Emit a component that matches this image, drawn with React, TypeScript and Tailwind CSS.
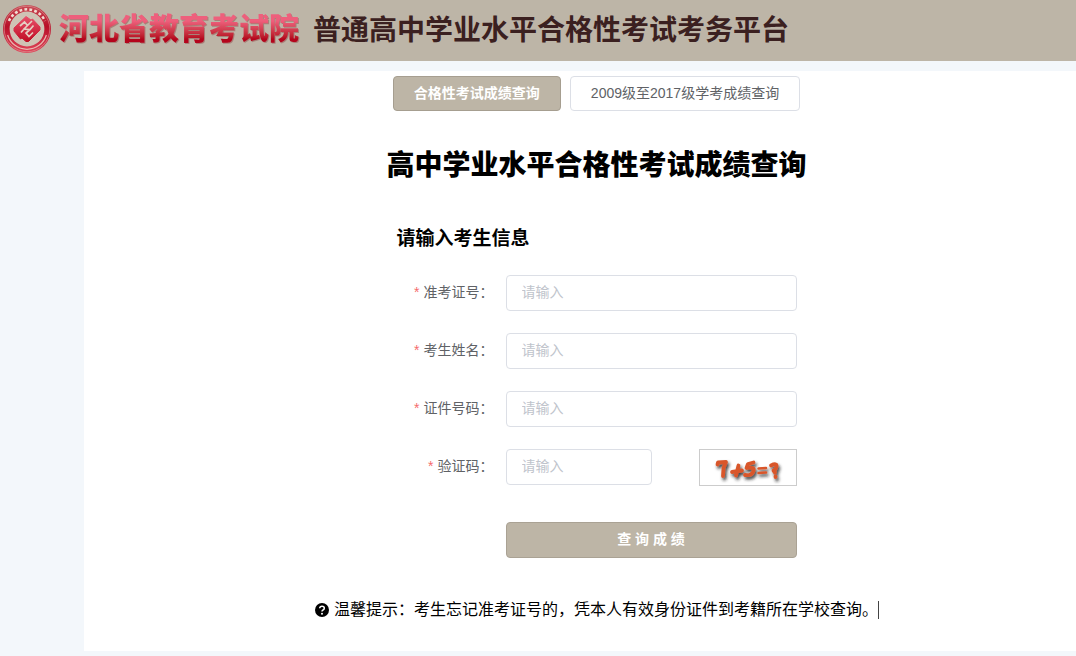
import { FormEvent, useState } from "react"

interface FIELD {
    id: string,
    label: string
}

const fields: FIELD[] = [
    { id: "ticket", label: "准考证号" },
    { id: "name", label: "考生姓名" },
    { id: "idcard", label: "证件号码" },
]

const tabs = ["合格性考试成绩查询", "2009级至2017级学考成绩查询"]

const inputClass = "h-9 w-full min-w-0 rounded border border-[#dcdfe6] bg-white px-[15px] pb-0.5 text-sm text-[#606266] placeholder-[#c0c4cc] outline-none focus:border-[#bdb5a6]"

function Seal() {
    return (
        <svg viewBox="0 0 50 50" className="size-[50px] shrink-0" aria-hidden="true">
            <defs>
                <linearGradient id="seal" x1="0" y1="0" x2="0" y2="1">
                    <stop offset="0" stopColor="#c94a55" />
                    <stop offset="0.45" stopColor="#b80f28" />
                    <stop offset="1" stopColor="#e0485c" />
                </linearGradient>
                <linearGradient id="mark" x1="0" y1="0" x2="0" y2="1">
                    <stop offset="0" stopColor="#e8506a" />
                    <stop offset="1" stopColor="#c00d24" />
                </linearGradient>
            </defs>
            <circle cx="25" cy="25" r="24" fill="url(#seal)" />
            <circle cx="25" cy="25" r="22.8" fill="none" stroke="#dc9a98" strokeWidth="0.6" />
            {/* ring of small marks along the top */}
            <path d="M7 17A19.700 19.700 0 0 1 43 17" fill="none" stroke="#f1dcd2" strokeWidth="2.6" strokeDasharray="2.8 2.2" />
            <path d="M5.600 31A20.300 20.300 0 0 0 44.400 31" fill="none" stroke="#e9b5af" strokeWidth="1.2" />
            <circle cx="25" cy="25" r="17.4" fill="#cfc3b5" />
            <path d="M24 12.500L29 16L30.500 15L38 23V26L26.500 37.500H24L20 34L18.500 35L12 27V24Z" fill="url(#mark)" stroke="url(#mark)" strokeWidth="1" strokeLinejoin="round" />
            <path d="M18 22L22.500 18L25.500 21.500L22 25L28 25.500L31.500 21.500M31 28.500L27 32.500L24 29L28 25.500M19 28.500L22 25M25.500 21.500L30 17" fill="none" stroke="#e5cfc3" strokeWidth="1.7" />
        </svg>
    )
}

function Captcha() {
    return (
        <svg viewBox="0 0 96 35" className="h-[35px] w-24" aria-hidden="true">
            <defs>
                <filter id="shade" x="-20%" y="-20%" width="150%" height="170%">
                    <feDropShadow dx="1.5" dy="2.5" stdDeviation="1.4" floodColor="#222" floodOpacity="0.85" />
                </filter>
            </defs>
            <g fill="none" stroke="#d9572b" strokeWidth="3.8" strokeLinecap="round" strokeLinejoin="round" filter="url(#shade)">
                <path d="M17.500 14.500L18 12.500L26 12L23.500 18L23 26" />
                <path d="M32 22L42 20.500M38.500 15.500L36 25.500" />
                <path d="M53.500 12.500L48 14L46.500 18Q55 16.500 53.500 21Q52 26 45 25" />
                <path d="M58.500 18.500L66 18M58.500 23L66 22.500" strokeWidth="2.6" />
                <path d="M71 15.500Q77 12.500 76.500 16.500Q76 19.500 73.500 20.500L75 22.500M75.500 26.500V27" />
            </g>
        </svg>
    )
}

function FieldLabel({ id, label }: FIELD) {
    return (
        <label htmlFor={id} className="w-[109px] shrink-0 pr-3 text-right text-sm leading-[34px] whitespace-nowrap text-[#606266]">
            <span className="mr-1 text-[#f56c6c]">*</span>{label}：
        </label>
    )
}

export default function App() {
    const [active, setActive] = useState(0)

    function onSubmit(e: FormEvent) {
        e.preventDefault()
    }

    return (
        <div className="min-h-screen bg-[#f3f7fb] pb-[5px] font-['Liberation_Sans','Noto_Sans_CJK_SC',sans-serif]">
            <header className="flex h-[61px] items-center bg-[#bdb5a7] pb-1 pl-0.5 whitespace-nowrap">
                <Seal />
                <span className="ml-[7px] bg-linear-to-b from-[#ee5f7c] from-30% to-[#b4041c] to-75% bg-clip-text text-[30px] leading-10 font-black text-transparent drop-shadow-[1px_1px_0_#a88078]">
                    河北省教育考试院
                </span>
                <span className="ml-3.5 pt-1 text-[28px] leading-10 font-bold text-[#3b2020]">普通高中学业水平合格性考试考务平台</span>
            </header>

            <main className="mt-2.5 ml-[84px] flex min-h-[580px] flex-col items-center bg-white pt-[5px] pl-[33px]">
                {/* tabs */}
                <div className="flex gap-[9px]">
                    {tabs.map((tab, i) => (
                        <button
                        key={tab} type="button" onClick={() => setActive(i)}
                        className={i === active
                            ? "h-[35px] rounded border border-[#a69e90] bg-[#bdb5a6] px-5 pb-0.5 text-sm font-bold text-white"
                            : "h-[35px] rounded border border-[#dcdfe6] bg-white px-5 pb-0.5 text-sm text-[#606266]"}
                        >
                            {tab}
                        </button>
                    ))}
                </div>

                <h1 className="mt-[35px] text-[28px] leading-10 font-black text-black">高中学业水平合格性考试成绩查询</h1>

                <form onSubmit={onSubmit} className="mt-[39px] w-[400px]">
                    <h2 className="mb-[22px] text-[19px] leading-7 font-bold text-black">请输入考生信息</h2>
                    {fields.map((field) => (
                        <div key={field.id} className="mb-[22px] flex">
                            <FieldLabel {...field} />
                            <input id={field.id} type="text" placeholder="请输入" className={inputClass} />
                        </div>
                    ))}
                    {/* captcha */}
                    <div className="flex">
                        <FieldLabel id="code" label="验证码" />
                        <div className="w-[146px]">
                            <input id="code" type="text" placeholder="请输入" className={inputClass} />
                        </div>
                        <button type="button" aria-label="验证码" className="ml-auto border border-[#ccc] bg-white">
                            <Captcha />
                        </button>
                    </div>
                    <div className="mt-9 pl-[109px]">
                        <button type="submit" className="h-9 w-full rounded border border-[#aaa294] bg-[#bdb5a6] pb-0.5 text-sm font-bold text-white">
                            查 询 成 绩
                        </button>
                    </div>
                </form>

                <p className="mt-10 flex items-center text-base leading-6 text-black">
                    <svg viewBox="0 0 16 16" className="mr-1 size-4" aria-hidden="true">
                        <circle cx="8" cy="8" r="7" fill="#000" />
                        <path d="M5.700 6.300Q5.900 4.200 8 4.200Q10.300 4.200 10.300 6.200Q10.300 7.300 9 8Q8 8.500 8 9.500" fill="none" stroke="#fff" strokeWidth="1.500" />
                        <circle cx="8" cy="11.700" r="1" fill="#fff" />
                    </svg>
                    温馨提示：考生忘记准考证号的，凭本人有效身份证件到考籍所在学校查询。
                    <span className="h-[18px] w-px bg-[#444]" />
                </p>
            </main>
        </div>
    )
}
